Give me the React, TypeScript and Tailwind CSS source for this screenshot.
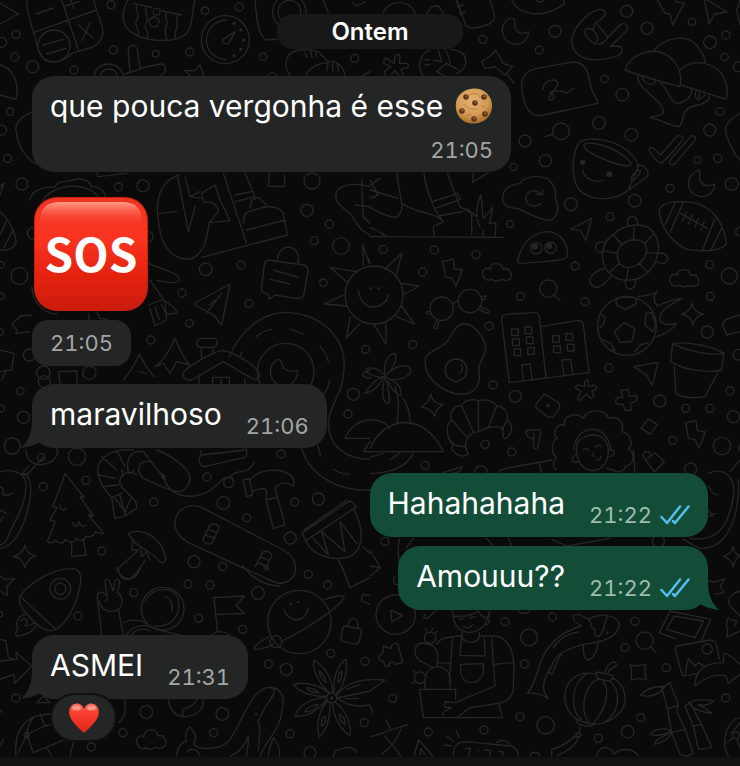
import type { ReactNode } from "react";

type Circle = [number, number, number];

type Patch = {
    x: number;
    y: number;
    lines: string[];
    circles: Circle[];
    dots?: Circle[];
};

// Wallpaper line art, split in patches that are drawn at three times their size
const patches: Patch[] = [
    {
        x: 0,
        y: 0,
        lines: [
            "M80 0C78 30 95 80 105 112C112 140 118 165 135 180C155 195 200 180 215 160L275 142C305 130 315 100 303 70L280 0M100 98L290 30M185 0L235 150M108 42L160 24M195 18L238 5M212 0L222 26M235 75L280 115M270 68L245 122M128 135L190 118M140 162L198 145",
            "M0 10L55 42L0 72",
            "M385 0C360 40 365 80 400 100C440 125 520 130 555 105C580 85 575 30 585 0M400 10L455 22M485 32L545 45M412 12C400 35 425 40 410 60C400 80 420 85 415 105M440 18C430 40 450 50 438 70C430 90 450 95 442 115M500 35C488 55 510 60 498 80C488 100 505 105 498 120M535 42C520 65 540 70 528 90C520 105 530 110 525 118",
            "M680 60C640 60 618 95 619 125C622 155 645 176 678 178M705 95L688 127C680 136 665 130 668 119Z",
            "M765 0C770 60 775 110 800 120L830 118",
            "M870 228C845 190 860 150 905 150C935 148 955 150 960 160L985 185C1010 180 1030 200 1035 225M918 228C925 205 950 190 985 188M915 158L922 172M932 154L936 172M948 154L950 170M985 190L980 212M998 190L998 214M1012 194L1016 214M1085 228L1110 215",
            "M390 215L385 160C383 130 408 130 412 150L420 205L480 192C500 190 505 215 480 228M375 222L420 208",
            "M282 228C290 180 360 180 370 228M300 228C308 200 345 200 352 228M555 212L585 212L600 195L612 228M555 212L572 228",
            "M0 195C40 205 60 250 48 298L0 285M98 335C60 350 40 375 50 400C55 440 80 480 115 495M290 517L295 530L380 520",
            "M90 600C95 565 140 560 165 562C170 540 205 545 220 540C250 530 270 545 275 560C310 560 325 590 310 605M130 600C160 550 270 540 300 600",
            "M0 560L12 550L0 585M1058 8L1070 18L1095 5M970 0L985 38",
        ],
        circles: [
            [162, 138, 48], [333, 14, 12], [48, 104, 12], [5, 127, 15], [44, 171, 12], [98, 200, 18],
            [222, 210, 12], [340, 150, 12], [467, 161, 10], [569, 156, 12], [615, 32, 11], [718, 21, 12],
            [789, 170, 11], [1064, 175, 12], [30, 335, 11], [5, 390, 15], [23, 475, 12], [66, 552, 18],
            [355, 561, 12], [429, 557, 18], [936, 543, 24], [818, 232, 14], [470, 35, 10], [462, 66, 15],
            [676, 119, 72], [868, 35, 50], [868, 35, 34],
        ],
        dots: [[702, 70, 5], [722, 90, 5], [731, 120, 5], [722, 148, 5], [702, 167, 5]],
    },
    {
        x: 370,
        y: 0,
        lines: [
            "M525 410L548 402",
            "M420 55C385 70 390 125 435 132C460 135 475 115 476 95C455 105 440 100 435 80C432 65 440 52 420 55Z",
            "M705 35C695 20 660 30 625 75C600 105 600 140 620 160C650 190 700 180 735 170C760 165 765 140 740 138L720 140C740 120 760 105 770 90C780 70 755 65 745 80L715 110C700 140 670 140 650 110C635 90 655 78 670 92C668 75 680 65 690 60C700 52 708 45 705 35ZM668 90C680 100 690 115 675 132M680 72C695 85 700 98 715 112",
            "M862 0L885 40L900 42L908 75L942 10L918 5L920 0M1003 0L1018 72L1033 42L1072 36L1010 0M1110 0L1100 30L1110 75",
            "M765 210C780 160 850 140 890 165C930 190 935 230 930 260C870 245 820 230 765 210ZM850 155C880 110 960 95 990 150C1002 165 1005 180 1005 190M930 210C970 170 1040 190 1060 230C1072 255 1075 280 1068 298L932 255",
            "M803 228C800 270 885 300 880 340C870 350 850 345 840 353C880 360 910 385 930 378C945 350 935 330 970 318C1000 315 1020 300 1018 288M815 232C830 260 855 255 855 245M870 250C890 255 895 300 920 312C950 305 965 290 965 268M978 272C970 300 985 305 1005 285M990 275L985 300",
            "M500 205L600 187C640 180 655 210 660 250C665 280 685 300 683 310C640 320 590 330 510 347C475 350 460 310 456 270C450 230 470 212 500 205ZM520 268C515 240 565 230 563 252C560 270 535 285 537 297C548 308 560 282 545 282C525 272 580 270 590 280C595 275 600 268 612 265",
            "M378 150L400 190L428 200L405 225L375 200L345 205L335 185L365 165ZM410 220L432 250",
            "M72 190L75 170C77 160 90 162 90 170L88 190L110 190C120 195 115 205 105 205L92 208L100 225M72 190L50 175C40 175 38 188 45 192L62 200L42 215L48 228M62 225L75 212L88 228",
            "M40 40C50 0 120 -5 135 40M170 40L185 20L205 18L220 40M258 -5L285 70C290 90 320 85 350 75C378 65 375 50 372 40L360 0M262 20L280 15M268 42L285 36M258 0L275 45",
            "M160 228C140 200 150 160 180 150M240 148C300 150 300 205 260 220M205 150L215 185L190 180M225 228L200 215L230 190L265 210M160 178L178 180M165 195L180 193M225 150C235 165 240 175 240 190",
            "M425 0C440 40 500 50 540 35C575 20 590 10 580 0",
            "M625 430C600 480 605 560 640 580C680 605 740 600 775 570L805 500M625 430C640 410 720 412 770 450C800 475 810 500 800 500M642 435C650 420 730 435 775 480C800 505 760 500 720 485C680 470 640 450 642 435ZM805 495C830 495 840 520 830 530L780 568M795 518C780 530 780 545 790 540C800 535 815 515 810 512C805 510 800 512 795 518M638 512C645 540 680 550 700 540",
            "M838 445C835 455 860 485 872 490C890 480 930 430 940 415C930 400 920 410 915 415L872 465L850 445C845 440 840 442 838 445ZM900 480C895 495 910 500 920 485L975 420C980 405 965 405 960 412Z",
            "M985 510C945 530 945 580 990 590C1020 590 1035 570 1033 552C1010 562 995 555 990 540C985 525 995 515 985 510ZM1110 340C1060 370 1060 390 1075 420C1085 450 1100 470 1110 480",
            "M310 520L308 547L355 518",
        ],
        circles: [
            [338, 118, 12], [555, 94, 18], [508, 150, 12], [770, 34, 18], [831, 85, 18], [966, 66, 11],
            [1020, 127, 19], [1068, 105, 12], [1064, 171, 11], [1105, 200, 15], [1050, 335, 12],
            [1019, 390, 18], [757, 284, 19], [704, 237, 11], [687, 369, 19], [573, 394, 25],
            [784, 404, 19], [465, 423, 18], [526, 482, 18], [430, 501, 11], [982, 480, 11],
            [1043, 475, 12], [900, 565, 12], [1085, 552, 19], [510, -4, 10],
        ],
        dots: [[638, 487, 8], [718, 523, 9]],
    },
    {
        x: 0,
        y: 180,
        lines: [
            "M540 -15C480 0 465 60 475 120C480 180 500 235 565 238C610 230 620 180 628 128L690 122L660 60L645 15L605 40L612 68C630 60 655 75 655 95L628 128M478 100L532 94M532 -15L565 155L585 80M605 55L570 50L555 -10M570 50L600 35M605 232L862 165L850 100C840 80 810 78 790 82L745 95C730 100 730 115 732 130M740 150L855 120M670 -20L740 190M735 -20L765 50L705 65M750 85L755 60L775 52L800 75M705 45L755 35",
            "M808 -20L805 18L853 20L855 -15",
            "M805 240L910 255C925 258 925 270 923 280L912 340C910 355 900 357 885 355L825 345L808 357L803 340C785 340 783 330 785 320L792 260C794 245 800 240 805 240M832 240C835 190 890 190 895 230L895 250M820 270L895 292M812 298L870 312",
            "M1110 20C1060 5 1000 15 1008 55C1015 85 1050 90 1060 115L1085 150L1110 165M1085 0L1090 115M1110 130L1090 110M1065 75L1110 80",
            "M580 372L690 312L665 435L640 405ZM620 398L665 340M628 375L645 360",
            "M445 250C490 270 540 280 538 300C530 315 500 305 470 302M450 300L490 358L445 375M490 358C500 370 535 385 530 398C520 405 500 400 495 400M495 365L500 420L465 438L450 385M465 380L478 420M485 375L500 405",
            "M0 95C30 120 50 170 48 190C40 210 10 212 0 210M20 120L0 165M40 150L10 205",
            "M548 580C560 560 640 515 665 512C700 515 770 555 780 585C775 600 765 600 755 595L670 545L575 600C555 605 548 590 548 580ZM603 502L605 535M640 502L640 518M605 475C585 478 585 500 603 502L640 502C655 498 655 475 640 475Z",
            "M370 600C390 580 410 540 418 523C430 545 450 580 465 590M418 575L440 580M465 560C490 545 515 500 525 475C535 500 555 540 568 555M465 560L490 550L510 580L530 545L568 555",
            "M95 405L60 408C55 425 40 415 38 435C45 450 55 445 48 460L90 455",
            "M0 510L42 520L35 570L0 575M20 570L5 600M175 575L180 612M175 575L230 573L232 612M265 400L268 420M290 395L300 415L320 418M95 320C100 370 130 400 170 402",
            "M688 530C720 450 790 397 857 397C960 400 1040 470 1032 570C1030 640 985 680 985 730C985 800 1040 838 1110 838M905 805C930 890 1020 935 1110 930M768 470C785 455 800 450 815 448M868 447L908 462M960 497C975 515 982 530 985 545M725 515L720 530M990 600C985 625 975 635 968 655M950 785L962 828M1000 867C1015 878 1030 883 1048 883",
            "M830 540C800 560 805 610 850 620C880 620 895 590 892 570C870 580 850 570 845 550C842 540 838 536 830 540Z",
            "M1090 255L1088 195L1108 250M1040 305L990 262L1070 275M1030 345L973 372L1040 378M1050 410L1040 473L1080 430M1075 330C1078 360 1095 375 1110 380",
        ],
        circles: [
            [857, 575, 85], [921, 91, 18], [988, 132, 12], [943, 182, 12], [1023, 198, 25],
            [617, 268, 19], [723, 255, 12], [970, 308, 11], [546, 339, 12], [747, 371, 12],
            [568, 430, 11], [453, 480, 12], [58, 288, 25], [2, 255, 10], [2, 349, 10], [0, 455, 10],
            [100, 160, 18], [443, 170, 16], [1097, 508, 12], [88, 525, 18], [130, 578, 20],
            [133, 605, 18], [268, 578, 20],
        ],
    },
    {
        x: 370,
        y: 180,
        lines: [
            "M398 50C400 20 430 15 450 10C460 -10 500 -15 530 -5C555 10 560 40 555 55C570 80 565 110 540 122C500 118 460 90 440 85C415 85 395 75 398 50ZM512 70C490 90 460 70 470 45C480 28 500 28 512 42M500 42L517 44L518 30",
            "M0 170L398 172M290 85L320 110C320 80 325 60 332 45C340 80 335 100 340 115L368 82L358 130L378 127L375 168M340 150L340 168M305 100L305 165M322 118L330 140",
            "M162 -20C165 20 180 50 195 90L220 125L190 140L192 168M232 -20L270 80L300 98M188 65L262 40L272 58L195 85M205 108L278 95M80 -20L95 70C150 105 190 95 215 120M95 70C100 90 85 115 70 112C30 100 10 90 0 80M0 30L85 55M0 143C30 150 40 165 48 168M0 0L25 45M30 -5L0 15M0 52C15 55 25 45 22 35",
            "M445 235C455 190 490 155 535 155C580 160 595 200 592 230C580 245 520 243 455 250C445 250 440 245 445 235Z",
            "M603 147L664 115L648 182L632 152Z",
            "M735 160C760 135 800 130 830 140C865 160 870 200 862 225C855 265 820 300 780 300C730 305 700 270 698 235C695 200 710 175 735 160ZM760 190C790 170 825 180 830 205C830 240 800 265 770 262C735 255 735 210 760 190ZM790 178L793 137M825 190L852 160M830 218L865 220M805 248L835 278M775 262L770 300M748 250L718 278M742 220L698 212M755 192L730 165",
            "M773 135C770 110 785 105 795 112C805 120 803 130 803 135M705 190C690 180 675 190 677 203C680 218 690 217 698 217M865 220C885 215 895 230 893 240C885 255 868 250 860 245M765 300C765 320 770 328 782 327C795 325 797 310 797 298M703 265C680 270 655 290 660 308C670 328 690 325 705 308L722 290",
            "M870 85C880 65 930 60 980 70C1030 85 1060 130 1070 190C1060 215 990 215 950 208C910 190 880 150 870 110C867 100 867 92 870 85ZM915 68L885 135M940 66L900 158M1035 115L998 210M1055 145L1022 212M932 100L1012 145M950 95L938 122M968 105L955 132M985 115L975 142M1003 122L993 152",
            "M217 245L250 237L253 268L277 268L258 320L245 293L228 293Z",
            "M45 268L95 220L78 290M95 310L148 318L98 345M95 378L133 432L75 408M48 428L48 493L12 433M0 250L-5 235M-5 380C25 385 50 370 55 345",
            "M248 370L266 362M180 395C165 392 165 402 180 402M333 350L348 348L345 358L335 360M330 380L357 392C358 402 350 402 328 388M200 420L190 443L200 447L208 422",
            "M552 346L570 362",
            "M165 545C165 510 215 510 235 480C250 455 260 430 285 432C320 435 345 480 347 505C345 540 320 545 328 585C330 620 310 640 280 643C230 645 165 600 165 545ZM275 555C280 570 275 578 265 582",
            "M418 608L395 420C393 408 400 405 410 403L490 398C502 397 506 400 508 410L528 595M513 440L620 422C635 420 638 425 640 435L657 578L418 608M460 600L455 555L480 552L487 598M582 585L575 540L602 538L608 582",
            "M425 447h20v20h-20zM465 441h20v20h-20zM428 477h20v20h-20zM469 471h20v20h-20zM432 507h20v20h-20zM473 503h20v20h-20zM548 467h20v20h-20zM588 461h20v20h-20zM551 498h20v20h-20zM592 493h20v20h-20z",
            "M762 428L795 447L785 485L750 487L733 455ZM737 360L752 352L795 352L800 370L768 388L740 375ZM690 400L705 412L700 435L686 445M828 400L845 398L858 435L848 455L825 435ZM700 480L722 490L735 512L720 510M795 515L810 495L835 488",
            "M805 350C830 345 850 345 862 335C850 350 850 365 862 378C890 365 910 358 935 355C890 380 865 395 870 420C880 440 900 432 920 430C905 450 880 465 858 470",
            "M966 370C970 390 980 400 1000 402C980 408 972 420 968 435C965 415 955 405 935 402C955 398 962 385 966 370Z",
            "M908 490C950 485 1020 495 1062 520L1055 570C1010 580 940 570 902 545ZM908 490C930 505 1010 530 1062 520M913 560L918 640C940 655 980 655 1005 650L1045 575",
            "M1060 430C1065 410 1080 420 1090 410L1110 405M1060 430C1050 440 1070 450 1070 465L1110 455M792 560L864 547L847 617L830 585Z",
            "M45 585C40 560 50 520 75 520C85 540 65 570 50 585C70 560 110 545 123 570C120 595 80 600 60 600M45 585C30 570 10 560 -10 565C-20 580 20 595 45 590",
            "M340 290C330 270 350 260 360 268C360 245 395 245 400 268C420 260 430 285 420 298C405 305 400 300 395 298C380 305 370 302 365 298C355 302 345 300 340 290Z",
            "M902 308C892 288 912 278 922 286C922 263 957 263 962 286C982 278 992 303 982 316C967 323 962 318 957 316C942 323 932 320 927 316C917 320 907 318 902 308Z",
        ],
        circles: [
            [12, 345, 87], [603, 73, 19], [794, 62, 19], [420, 132, 11], [720, 110, 12], [1110, 155, 13],
            [40, 208, 12], [193, 210, 12], [318, 224, 12], [158, 276, 12], [616, 258, 12],
            [451, 349, 12], [645, 365, 12], [1019, 254, 12], [1078, 288, 24], [1021, 349, 12],
            [1012, 456, 18], [357, 438, 12], [128, 493, 12], [717, 564, 12], [1105, 524, 16],
            [499, 205, 17], [542, 203, 17], [215, 386, 35], [300, 363, 35], [535, 326, 26],
            [258, 570, 33], [771, 438, 88],
        ],
        dots: [[495, 200, 9], [538, 198, 9], [2, 325, 4], [26, 325, 4]],
    },
    {
        x: 0,
        y: 370,
        lines: [
            "M597 20L597 42M735 25L735 42M638 42L638 22L688 22L688 42M663 22L663 42",
            "M195 310C180 360 160 400 158 410L172 412L150 450L165 455L142 515C150 520 165 520 165 510C180 525 195 520 195 508C210 522 225 518 228 505C240 515 255 510 258 498C270 505 285 495 285 485C300 492 312 492 310 488L265 435L280 438L240 380L252 382ZM215 515L215 560L258 555L250 510M180 405C182 425 195 425 198 412M218 458C225 475 235 470 237 455C245 475 255 470 258 465",
            "M75 525C78 545 90 555 107 558C90 562 80 575 75 592C70 572 60 562 40 560C60 555 70 545 75 525Z",
            "M0 305C40 295 80 310 78 350C75 420 40 450 25 500C15 520 5 525 0 525M75 310C100 335 95 380 80 430C60 500 30 530 0 535M85 290L65 312L80 315L130 262M78 240C80 280 110 290 140 280C175 270 175 240 170 235M0 350C10 355 10 355 8 372C15 378 25 378 35 370M0 420L20 430M0 455L10 440",
            "M400 240C340 235 295 260 293 300C295 340 320 365 335 382L345 445C365 440 375 440 378 435L410 415L408 395L360 345C355 310 385 300 410 312M305 260L350 300M297 315L345 325M310 350L355 345M335 382L365 370M350 240L375 290M375 435L360 375M345 385L375 425L395 380M370 320L365 300M385 312L382 290M398 310L400 300",
            "M385 300C375 260 400 240 430 245L485 315L510 360M430 325L510 360C550 375 570 350 570 320C565 290 500 250 470 240M430 325C405 300 415 270 450 275M485 310L500 345C540 400 620 380 655 340C665 325 690 315 700 325M690 320C720 290 740 320 762 278",
            "M600 240L605 255L735 240M605 255C590 265 600 290 612 290L735 262C745 255 740 240 738 236",
            "M730 330L748 326L758 375L740 380ZM750 330C770 300 840 290 870 315C885 325 882 345 880 348C860 335 840 335 825 355L855 465L820 475L798 390L832 382M798 390L800 362C790 350 765 360 757 365",
            "M525 455C530 415 570 395 610 415L850 540C880 555 890 580 885 610C870 640 840 645 820 635L570 520C540 505 520 480 525 455ZM630 465C650 455 660 470 655 480L635 520C620 525 605 515 610 505ZM625 478L650 488M615 495L645 505M790 545C810 540 820 555 812 565L795 600M780 560L805 570M772 578L800 588M790 545L765 590",
            "M385 490C420 470 490 500 497 570C495 580 485 580 480 575C460 545 400 530 385 490ZM400 510L395 540L415 540L360 590C350 600 360 630 385 628C400 625 410 610 435 570M420 530L425 560L440 545L450 570",
            "M905 490L1050 392L1070 410L918 512ZM912 480L1040 390M915 510C940 560 1000 575 1050 560C1090 540 1095 480 1060 415M940 505L985 555L965 485L1035 545L1020 455L1070 520M1015 570L1030 600M1090 530L1110 550",
            "M1035 205C1050 170 1080 150 1110 150M1035 205L1110 205M1110 215L1090 245L1110 245M1110 0C1080 10 1080 20 1110 25",
        ],
        circles: [
            [61, 63, 11], [2, 115, 11], [70, 142, 18], [37, 228, 24], [231, 260, 26], [123, 262, 11],
            [258, 331, 12], [130, 350, 12], [461, 396, 12], [621, 321, 12], [670, 399, 19],
            [740, 443, 12], [884, 396, 12], [955, 387, 18], [843, 252, 12], [871, 504, 18],
            [582, 575, 18], [668, 590, 12], [305, 543, 12], [1060, 73, 18], [1044, 132, 12],
            [686, 338, 15],
        ],
        dots: [[490, 320, 7]],
    },
    {
        x: 370,
        y: 370,
        lines: [
            "M45 20C70 30 100 50 92 78C75 70 60 50 55 35M45 20C35 60 35 90 52 102C65 95 55 60 50 30M40 20C10 30 0 50 -15 70C10 65 30 45 40 20M75 50C90 90 85 130 80 165M100 85C115 110 122 130 120 162",
            "M0 148C30 150 50 160 60 175M0 235C40 140 160 120 220 245M-5 245L220 245M130 250C110 290 60 310 0 310M90 248L60 270M40 250L0 262",
            "M182 72C187 92 195 102 220 103C205 112 197 120 195 140C185 120 175 115 153 110C170 102 180 92 182 72Z",
            "M250 225C225 200 228 160 245 150C235 125 255 105 275 108C280 90 310 85 325 92C350 85 375 95 380 108C405 110 415 130 412 150C430 165 430 190 405 207C395 200 400 180 400 175C380 165 350 170 325 185C305 185 270 215 295 250C290 262 255 262 245 235ZM245 150L290 200M275 108L310 185M325 92L325 185M380 108L355 172M412 150L395 178M245 215C255 235 285 225 290 235",
            "M523 72L565 98C572 105 570 112 566 118L550 140C540 145 535 142 530 138L500 115C495 108 497 105 500 100Z",
            "M645 50C640 30 655 25 655 35L655 50L672 45C685 50 682 60 665 62L672 80C665 90 658 85 650 72L630 90C618 92 620 80 635 65L618 55C612 45 625 42 645 50Z",
            "M752 62L775 58L778 80L798 76C805 90 800 95 780 100L785 120L765 122L760 103L738 102C735 85 738 82 758 82Z",
            "M470 180L512 180C512 195 505 220 505 230C500 238 490 238 490 228L492 205C475 208 465 195 470 180ZM492 190L492 205",
            "M835 147L862 163L842 193L813 175ZM947 158L978 152L982 182L1006 186L987 235L975 208L955 205ZM826 270L855 248L883 275L853 305ZM822 266C812 240 840 238 842 256",
            "M560 300C545 290 550 270 560 262C540 250 545 210 562 205C545 190 560 160 583 165C580 135 620 125 640 145C655 115 705 115 715 145C745 135 765 160 755 185C785 190 790 225 775 235C800 255 790 285 765 290C765 305 740 310 730 300L710 295",
            "M620 225C625 205 650 195 668 195C695 195 708 210 714 230C720 270 700 300 668 302C635 300 615 270 620 225ZM612 240C615 160 715 155 722 240M617 255C600 262 608 285 625 275M718 240C735 235 740 255 720 260M640 240C645 233 655 235 657 242M678 232C682 222 692 225 693 230M668 250L672 258M680 270C690 270 694 262 692 258",
            "M385 308C390 295 410 295 545 270M508 280L515 308M790 240L795 308M220 308L275 290C280 300 260 308 250 310",
            "M90 505C80 530 85 560 90 590M350 505L370 528M415 505L425 528M545 508L590 528L720 505M130 505L108 535M0 540L30 590",
            "M1015 310C1060 290 1100 320 1090 380C1080 440 1060 520 960 505M1105 330C1110 420 1080 540 990 535C960 525 950 510 940 508M1015 350C1025 355 1020 375 1045 375M1015 420L1030 440M1015 440L1035 430M1080 305L1110 270M1105 240L1110 225M1090 530C1092 550 1100 555 1110 558C1095 565 1092 580 1090 592C1085 570 1075 565 1060 560C1080 552 1085 545 1090 530",
        ],
        circles: [
            [369, 45, 12], [436, 79, 18], [869, 93, 18], [947, 115, 12], [1020, 115, 12], [1080, 63, 12],
            [1090, 140, 18], [908, 211, 12], [1056, 228, 26], [962, 297, 18], [345, 223, 12],
            [425, 246, 12], [165, 286, 12], [333, 305, 18], [45, 514, 12], [865, 514, 18],
        ],
        dots: [[534, 107, 5]],
    },
    {
        x: 0,
        y: 566,
        lines: [
            "M60 90C90 50 160 5 220 8C245 10 245 40 238 70C225 130 190 185 160 193C135 198 115 180 95 160C75 140 50 110 60 90ZM62 92L165 188M75 145C50 150 45 180 55 190C40 200 50 215 55 210C80 205 105 195 110 175M62 165C75 150 90 165 75 178C90 185 95 170 105 172",
            "M0 30L15 40L45 38L20 60L22 88L0 75",
            "M305 207L292 95C290 75 310 75 315 85C325 85 325 100 315 105M320 85L315 45C318 35 328 38 330 50L340 75L345 45C350 35 362 40 358 55L352 80C370 90 370 120 355 130C330 145 300 130 298 105M355 130L370 207",
            "M435 105C460 60 520 60 535 100C545 150 510 185 465 180M495 90C515 100 520 115 515 135M370 170C400 155 430 165 440 175M380 205C400 180 430 170 470 190L540 207M395 205C410 190 430 185 450 195",
            "M652 195L642 95L733 90L708 118L732 142L650 145M635 207C650 192 670 195 690 207",
            "M852 130C865 170 915 175 925 125M975 100C1000 90 1035 85 1032 95C1020 125 900 200 845 225M810 210C780 225 755 245 765 250C775 250 800 245 820 235",
            "M1035 180L1075 188C1085 190 1085 195 1083 202L1078 225C1075 235 1070 235 1060 233L1030 227C1022 225 1022 218 1024 210L1028 188C1030 180 1032 180 1035 180ZM1045 180C1045 150 1075 150 1075 185M1110 88L1088 85L1085 105L1110 115",
            "M990 380C960 360 935 310 942 283C975 300 1000 345 998 378M1002 380C1000 340 1010 300 1038 280C1045 320 1030 360 1008 385M1010 388C1030 360 1070 340 1110 342M1110 375L1012 396C1040 420 1080 425 1110 415M1005 408C1035 430 1055 470 1050 508C1020 490 1000 450 998 412M990 412C990 450 985 490 958 512C945 475 960 430 982 405M980 400C955 435 920 455 885 450C895 420 935 395 978 394M980 390C940 395 900 380 880 355C920 345 965 360 985 382",
            "M958 315C970 325 978 340 978 350C965 340 958 325 958 315ZM1025 315C1028 325 1022 345 1015 350C1012 335 1018 320 1025 315ZM920 365C935 365 950 372 955 380C940 382 925 375 920 365ZM915 438C920 425 940 415 955 415C948 430 930 438 915 438ZM965 480C962 465 968 455 975 450C980 462 975 475 965 480ZM1035 475C1022 468 1018 455 1018 445C1030 450 1036 462 1035 475ZM1035 398L1075 398M1040 370L1080 355",
            "M0 220L18 225L25 275L45 280M0 285L50 280L48 258L95 300M95 300L45 352L42 325L0 340",
            "M530 570C535 530 550 530 560 525C550 510 565 480 570 483C585 500 590 510 583 530C575 550 660 560 690 520C730 460 750 380 800 365C850 360 855 400 845 440C840 490 800 520 780 570M560 560C570 545 590 545 600 570M820 370C835 380 790 420 775 465L780 490L775 555M820 515C840 540 840 560 838 570M805 570C805 550 815 530 820 515M690 570C720 560 740 530 745 510C748 530 740 550 740 570",
            "M48 570C40 490 80 440 155 445M80 505L55 560M80 505L135 480L155 475M135 480L120 445M80 505L100 560L195 520M100 455C85 470 82 490 80 505M155 570L140 545M220 530L210 570",
            "M505 400C510 440 535 455 560 452C595 445 612 430 610 400M550 450C545 430 550 425 565 425C580 415 590 410 590 400M375 400C378 440 375 455 355 470M110 410L130 390L150 410ZM0 430L8 440M0 540L10 520",
            "M1000 570C1005 545 1025 550 1030 548C1045 540 1065 545 1070 560M350 5C355 30 380 45 400 35C415 25 420 10 422 0M728 0C760 40 800 60 840 60M1025 0L1050 65L1110 35M790 0L805 12L803 0",
            "M412 535C402 515 422 505 432 513C432 485 470 485 474 510C494 502 504 530 492 542C480 550 472 547 467 543C452 553 442 550 437 545C427 552 417 548 412 535Z",
        ],
        circles: [
            [564, 54, 12], [630, 57, 12], [401, 80, 12], [234, 150, 12], [596, 157, 12], [728, 190, 12],
            [774, 81, 19], [925, 25, 12], [983, 57, 12], [992, 262, 12], [805, 294, 12], [859, 310, 18],
            [1095, 286, 12], [439, 438, 19], [667, 444, 19], [641, 500, 12], [369, 500, 12],
            [274, 543, 12], [870, 503, 12], [1093, 470, 12], [930, 560, 18], [48, 396, 12],
            [0, 145, 8], [181, 68, 31], [181, 68, 17], [488, 128, 64], [898, 168, 95], [828, 227, 18],
            [80, 507, 8], [995, 396, 15],
        ],
        dots: [[873, 113, 4], [894, 108, 4], [769, 445, 4], [995, 396, 5]],
    },
    {
        x: 370,
        y: 566,
        lines: [
            "M62 132L98 148L66 168ZM40 240L62 248C65 230 85 228 85 240L98 290L75 295C70 280 55 290 58 300L45 300L40 285C25 285 20 270 38 262Z",
            "M248 135L252 165C265 200 310 215 345 175L360 135M345 175C355 180 360 165 355 160M265 160L280 158M300 155L315 152M280 180C290 190 305 185 308 175M275 198L278 220C295 235 320 230 328 215L328 200M328 210L375 210C420 215 430 260 432 300L430 370C425 400 400 410 385 412L300 425L260 455M200 235C210 215 235 212 278 210M248 215L238 345M275 215L270 268L345 270L343 215M272 295L340 293L340 320C330 360 280 360 272 320ZM365 215L375 360L255 410L225 408C218 425 230 425 245 425C225 435 215 440 220 448M372 295L430 290M385 412L398 455L160 455M205 290L240 292M250 150C290 155 310 145 325 135C335 155 350 160 360 150",
            "M257 400L257 370L148 370L160 455M165 370C160 320 180 300 205 302C235 305 245 330 240 368M190 305L150 285C130 270 130 240 150 232C180 230 205 245 203 270L200 302M170 195L166 188M185 193L188 186M135 320L130 315M133 350L126 352M196 200L202 196",
            "M610 150C620 140 640 150 655 160C690 140 740 145 748 175C745 220 680 230 640 235C590 250 560 260 545 300C520 340 510 370 535 398C515 385 490 380 472 382C500 350 500 310 520 270C550 210 600 190 635 180C615 170 608 160 610 150ZM655 160C670 170 655 185 675 190C665 210 690 220 695 200C705 190 700 175 712 150M640 235C640 260 640 280 655 282C680 270 680 250 685 230M545 300C530 310 540 325 545 325C560 300 560 280 575 265M550 245C570 215 600 200 625 198",
            "M680 325C620 310 580 350 585 400C590 450 630 470 670 475C720 475 765 440 765 400C765 360 740 340 725 335M680 318L730 328C730 340 725 345 715 345L690 340C678 335 676 325 680 318ZM690 338C650 345 625 420 655 470M700 345C725 380 700 440 670 472M718 345C755 370 750 440 705 468M650 325C600 350 600 440 635 460M618 455C615 475 635 480 665 480L672 472M705 320C710 290 735 280 740 295C735 310 715 305 715 320M630 482L628 500M545 550C580 545 600 520 620 508M560 570C590 555 620 540 625 512M545 550L545 570",
            "M780 297C800 302 810 300 828 295C822 315 825 325 830 342C812 335 800 338 782 342C787 325 787 315 780 297ZM842 243L858 260",
            "M900 135L868 200L915 218M900 135L1022 160L995 222M912 150L890 190L975 215L1000 165ZM920 240L1020 222C1035 222 1038 230 1040 240L1048 280M920 240C915 245 916 250 918 258L935 322C937 332 945 330 955 328L985 322M945 325L955 278L975 300L985 290L1005 302",
            "M975 360C975 310 1010 290 1060 290L1062 262C1075 262 1095 280 1110 295M1110 325L1075 352L1068 330C1030 320 1000 340 975 360",
            "M812 388C830 365 860 360 885 362C870 385 840 395 812 388ZM875 365L900 350L925 418L892 428ZM892 428L905 500M925 418L920 435L945 490L905 500L930 565C945 572 960 570 970 560L945 490M945 420L970 480L995 475L960 410ZM970 480L985 550L1025 545L995 475M955 410C970 400 1010 400 1030 405C1010 420 1010 420 985 415C1010 430 1020 435 1025 442C1000 440 970 430 960 415M840 505C860 485 890 485 905 495C880 510 860 510 840 505ZM905 497C880 510 850 525 855 535C880 530 900 515 905 500",
            "M1110 455C1080 460 1060 500 1065 545L1075 570M1085 500L1110 470M1070 530L1090 515M1100 520L1110 545",
            "M250 570C250 535 265 528 290 527L420 540C440 545 445 560 445 570M380 530C390 520 415 520 420 538M258 492L268 515M230 510L250 525M222 537L245 540",
            "M480 570C485 555 505 555 510 570M680 570C685 540 720 535 732 565C750 545 790 545 805 570",
            "M0 340L45 342L0 375M0 0L30 5L0 30M75 30C65 45 75 60 85 55M0 420L8 440M165 145C155 160 170 160 180 150L195 135M445 135C455 145 470 145 480 135",
            "M1015 45L1035 48L1065 38L1050 60L1062 80L1035 85M1110 75C1080 85 1070 100 1080 120L1110 150M1075 155C1060 180 1080 190 1070 215C1085 205 1100 200 1110 195M1080 160L1100 165L1095 180",
            "M5 512L112 476M48 462L62 492M92 492C80 525 55 550 35 565M45 510C60 530 80 550 92 570M132 570L146 522L188 570M150 566L152 548L166 566",
            "M285 548L300 546L296 570M325 552L325 556M345 552L362 553L360 570M385 556L400 558L398 570",
        ],
        circles: [
            [77, 146, 59], [405, 167, 12], [547, 153, 12], [477, 214, 25], [463, 294, 12],
            [450, 452, 12], [527, 478, 26], [342, 492, 12], [175, 498, 12], [68, 397, 12],
            [795, 166, 12], [765, 245, 12], [889, 305, 12], [812, 455, 12], [773, 497, 19],
            [685, 517, 12], [1067, 396, 12], [1012, 249, 15], [180, 215, 17], [150, 335, 17],
            [625, 507, 7], [824, 224, 26], [1098, 508, 10],
        ],
        dots: [[712, 200, 4]],
    },
];

function Wallpaper() {
    return (
        <svg
            className="absolute inset-0 h-full w-full"
            viewBox="0 0 740 766"
            preserveAspectRatio="xMidYMin slice"
            fill="none"
            stroke="#262626"
            strokeWidth="4"
            strokeLinecap="round"
            strokeLinejoin="round"
            aria-hidden="true"
        >
            {patches.map((patch) => (
                <g
                    key={`${patch.x}-${patch.y}`}
                    transform={`translate(${patch.x} ${patch.y}) scale(0.33333)`}
                >
                    {patch.lines.map((d) => (
                        <path key={d} d={d} />
                    ))}
                    {patch.circles.map(([cx, cy, r]) => (
                        <circle key={`${cx}-${cy}-${r}`} cx={cx} cy={cy} r={r} />
                    ))}
                    {patch.dots?.map(([cx, cy, r]) => (
                        <circle key={`${cx}-${cy}`} cx={cx} cy={cy} r={r} fill="#262626" stroke="none" />
                    ))}
                </g>
            ))}
        </svg>
    );
}

function Cookie() {
    const chips = [[11, 9], [29, 9], [20, 15], [7, 23], [30, 26], [19, 31]];

    return (
        <svg className="h-9 w-[38px]" viewBox="0 0 38 36" role="img" aria-label="cookie">
            <defs>
                <radialGradient id="cookie" cx="0.45" cy="0.35" r="0.65">
                    <stop offset="0" stopColor="#e5b273" />
                    <stop offset="0.65" stopColor="#d39a55" />
                    <stop offset="1" stopColor="#a96c2c" />
                </radialGradient>
            </defs>
            <path
                d="M19 0.5C25 0 31 3 34 8C38 13 38 21 35 26C32 32 26 35.500 19 35.500C12 35.500 6 33 3 27C0 22 0 14 3 9C6 4 12 1 19 0.500Z"
                fill="url(#cookie)"
            />
            <path d="M14 7C20 4 25 6 25 10M9 16C12 20 16 22 22 21M26 18C29 18 32 20 32 22M11 28C13 26 15 26 17 27" stroke="#b9803f" strokeWidth="1" fill="none" />
            {chips.map(([x, y]) => (
                <g key={`${x}-${y}`}>
                    <circle cx={x} cy={y} r="2.800" fill="#5a3216" />
                    <circle cx={x + 0.5} cy={y - 0.8} r="1.300" fill="#8a5a34" />
                </g>
            ))}
        </svg>
    );
}

function SosSticker() {
    return (
        <svg className="ml-0.5 mt-[25px] size-[114px]" viewBox="0 0 114 114" role="img" aria-label="SOS">
            <defs>
                <linearGradient id="sos" x1="0" y1="0" x2="0" y2="1">
                    <stop offset="0" stopColor="#ee3422" />
                    <stop offset="0.35" stopColor="#fa3420" />
                    <stop offset="0.7" stopColor="#e3220f" />
                    <stop offset="1" stopColor="#cb1c0c" />
                </linearGradient>
                <linearGradient id="gloss" x1="0" y1="0" x2="0" y2="1">
                    <stop offset="0" stopColor="#ff9c88" />
                    <stop offset="1" stopColor="#fb3a26" stopOpacity="0" />
                </linearGradient>
            </defs>
            <rect width="114" height="114" rx="23" fill="#c91d10" />
            <rect x="1" y="1" width="112" height="111" rx="22" fill="url(#sos)" />
            <path d="M6 30V24C6 11 13 5 26 5H88C101 5 108 11 108 24V30Z" fill="url(#gloss)" />
            <text
                x="57"
                y="75"
                textAnchor="middle"
                fill="#fff"
                className="font-['Noto_Sans_CJK_SC',sans-serif] text-[46px] font-bold"
            >
                SOS
            </text>
        </svg>
    );
}

function ReadTicks() {
    return (
        <svg className="h-5 w-[30px]" viewBox="0 0 30 20" fill="none" stroke="#53bdeb" strokeWidth="2.500" strokeLinecap="round" strokeLinejoin="round" role="img" aria-label="Lida">
            <path d="M1.500 12L7 18L20 1.500M13 16L15 18L28.500 1.500" />
        </svg>
    );
}

function Heart() {
    return (
        <svg className="h-8 w-8" viewBox="0 0 32 32" aria-hidden="true">
            <defs>
                <linearGradient id="heart" x1="0" y1="0" x2="0" y2="1">
                    <stop offset="0" stopColor="#ff6a5c" />
                    <stop offset="0.3" stopColor="#f9402f" />
                    <stop offset="1" stopColor="#dd2418" />
                </linearGradient>
            </defs>
            <path
                d="M16 31C14 29 3 20 1.500 13C0 6 4 1.500 9 1.500C12.500 1.500 15 4 16 7C17 4 19.500 1.500 23 1.500C28 1.500 32 6 30.500 13C29 20 18 29 16 31Z"
                fill="url(#heart)"
            />
            <ellipse cx="8.500" cy="6" rx="4.500" ry="2.500" fill="#ffb0a4" opacity="0.7" />
            <ellipse cx="23.500" cy="6" rx="4.500" ry="2.500" fill="#ffb0a4" opacity="0.7" />
        </svg>
    );
}

function Time({ children }: { children: string }) {
    return <time className="text-[22px] leading-7 tabular-nums">{children}</time>;
}

type BubbleProps = {
    text: string;
    time: string;
    mine?: boolean;
    tail?: boolean;
    className?: string;
};

function Bubble({ text, time, mine, tail, className }: BubbleProps) {
    return (
        <div
            className={`relative flex items-end gap-6 rounded-[22px] px-[18px] pt-1 pb-2 ${
                mine ? "self-end bg-[#144d37] text-[#9dbcae]" : "self-start bg-[#242626] text-[#a3a5a5]"
            } ${className ?? ""}`}
        >
            {tail && (
                <svg
                    className={`absolute bottom-0 h-7 w-8 ${mine ? "-right-[11px] -scale-x-100" : "-left-[11px]"}`}
                    viewBox="0 0 32 28"
                    fill={mine ? "#144d37" : "#242626"}
                    aria-hidden="true"
                >
                    <path d="M11 0C11 12 8 20 0 28C8 27 14 25 19 22L32 28V0Z" />
                </svg>
            )}
            <p className="relative text-[30px] leading-[52px] text-white">{text}</p>
            <div className="relative flex items-center gap-2">
                <Time>{time}</Time>
                {mine && <ReadTicks />}
            </div>
        </div>
    );
}

function Conversation({ children }: { children: ReactNode }) {
    return (
        <main className="relative flex min-h-screen flex-col overflow-hidden bg-[#0a0a0a] font-['Inter',sans-serif]">
            <Wallpaper />
            <div className="relative flex flex-col px-8 pt-3.5">{children}</div>
            <div className="relative mt-auto h-[9px] bg-[#121212]" />
        </main>
    );
}

export default function App() {
    return (
        <Conversation>
            <h2 className="self-center rounded-2xl bg-[#181818] px-[54px] text-2xl leading-[35px] font-semibold text-white">
                Ontem
            </h2>

            <div className="mt-[27px] self-start rounded-[22px] bg-[#242626] px-[18px] pt-1 pb-2 text-[#a3a5a5]">
                <p className="flex items-center gap-3 text-[30px] leading-[52px] text-white">
                    que pouca vergonha é esse <Cookie />
                </p>
                <div className="mt-1 flex justify-end">
                    <Time>21:05</Time>
                </div>
            </div>

            <SosSticker />
            <div className="mt-[9px] flex self-start rounded-2xl bg-[#242626] px-[18px] py-[9px] text-[#a3a5a5]">
                <Time>21:05</Time>
            </div>

            <Bubble className="mt-[18px]" text="maravilhoso" time="21:06" tail />
            <Bubble className="mt-[25px]" text="Hahahahaha" time="21:22" mine />
            <Bubble className="mt-[9px]" text="Amouuu??" time="21:22" mine tail />
            <Bubble className="mt-[25px]" text="ASMEI" time="21:31" tail />

            <button
                type="button"
                aria-label="Reação: coração"
                className="relative -mt-1 ml-5 flex h-[45px] w-[63px] items-center justify-center self-start rounded-full bg-[#242626] ring-2 ring-[#0e0f0f]"
            >
                <Heart />
            </button>
        </Conversation>
    );
}
